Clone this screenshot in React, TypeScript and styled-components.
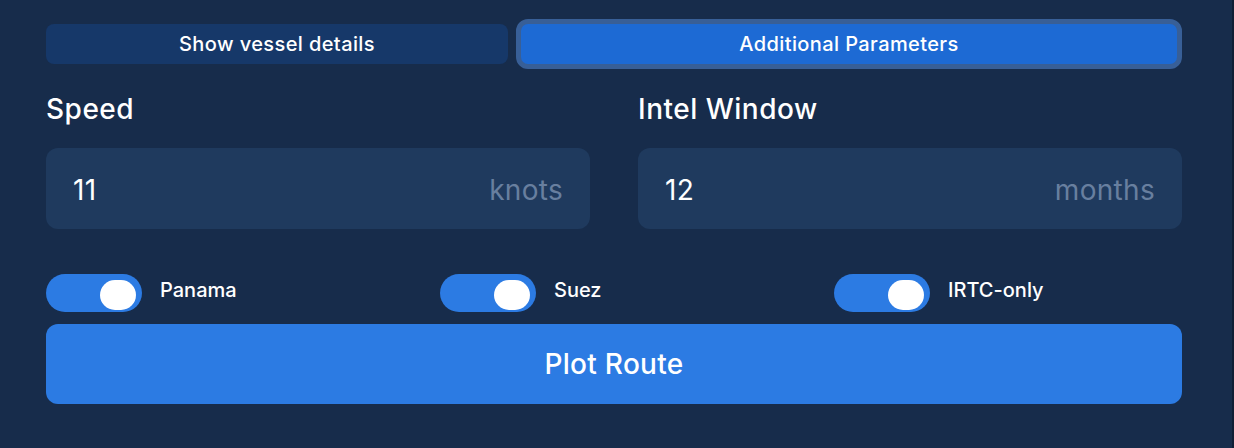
import * as React from 'react';
import styled, { createGlobalStyle } from 'styled-components';

const GlobalStyle = createGlobalStyle`
  html, body {
    margin: 0;
    padding: 0;
    background: #172c4b;
  }
  * {
    box-sizing: border-box;
  }
`;

const Panel = styled.div`
  width: 1234px;
  height: 448px;
  padding: 19px 50px 0 46px;
  background: #172c4b;
  border-right: 2px solid #0f1e35;
  font-family: Inter, Lato, sans-serif;
  color: #ffffff;
  display: flex;
  flex-direction: column;
`;

const Tabs = styled.div`
  display: grid;
  grid-template-columns: 462px 1fr;
  gap: 8px;
  align-items: center;
  height: 50px;
`;

const Tab = styled.button<{ $active?: boolean }>`
  height: ${(p) => (p.$active ? '50px' : '40px')};
  border-radius: ${(p) => (p.$active ? '12px' : '8px')};
  border: ${(p) => (p.$active ? '5px solid #385f97' : 'none')};
  background: ${(p) => (p.$active ? '#1d6ad4' : '#163869')};
  color: #ffffff;
  font-family: inherit;
  font-size: 20px;
  font-weight: 500;
  letter-spacing: 0.4px;
  padding: 0;
  cursor: pointer;
`;

const Fields = styled.div`
  display: grid;
  grid-template-columns: 1fr 1fr;
  gap: 48px;
  margin-top: 23px;
`;

const Field = styled.div`
  display: flex;
  flex-direction: column;
`;

const Label = styled.div`
  font-size: 28px;
  font-weight: 500;
  letter-spacing: 0.5px;
  line-height: 34px;
  height: 34px;
  margin-bottom: 22px;
`;

const InputBox = styled.div`
  height: 81px;
  border-radius: 12px;
  background: #1f3a5e;
  display: flex;
  align-items: center;
  justify-content: space-between;
  padding: 3px 27px 0;
  font-size: 28px;
  letter-spacing: 0.3px;
`;

const Value = styled.span`
  color: #ffffff;
`;

const Unit = styled.span`
  color: #687f9f;
`;

const Switches = styled.div`
  display: grid;
  grid-template-columns: repeat(3, 1fr);
  gap: 46px;
  margin-top: 45px;
`;

const SwitchItem = styled.label`
  display: flex;
  align-items: center;
  gap: 18px;
  cursor: pointer;
`;

const Track = styled.span<{ $on: boolean }>`
  position: relative;
  width: 96px;
  height: 38px;
  border-radius: 19px;
  background: ${(p) => (p.$on ? '#2c7be3' : '#3a4f6e')};
  flex-shrink: 0;
`;

const Knob = styled.span<{ $on: boolean }>`
  position: absolute;
  top: 6px;
  ${(p) => (p.$on ? 'right: 6px;' : 'left: 6px;')}
  width: 36px;
  height: 30px;
  border-radius: 15px;
  background: #ffffff;
`;

const SwitchText = styled.span`
  font-size: 20px;
  font-weight: 500;
  margin-top: -6px;
`;

const PlotButton = styled.button`
  margin-top: 12px;
  height: 80px;
  border: none;
  border-radius: 12px;
  background: #2c7be3;
  color: #ffffff;
  font-family: inherit;
  font-size: 28px;
  font-weight: 500;
  letter-spacing: 0.3px;
  cursor: pointer;
`;

const Toggle = ({ label, on, onChange }: { label: string; on: boolean; onChange: () => void }) => (
  <SwitchItem onClick={onChange}>
    <Track $on={on}>
      <Knob $on={on} />
    </Track>
    <SwitchText>{label}</SwitchText>
  </SwitchItem>
);

const App = () => {
  const [tab, setTab] = React.useState<'vessel' | 'params'>('params');
  const [routes, setRoutes] = React.useState({ panama: true, suez: true, irtc: true });

  const flip = (key: keyof typeof routes) => setRoutes({ ...routes, [key]: !routes[key] });

  return (
    <>
      <GlobalStyle />
      <Panel>
        <Tabs>
          <Tab $active={tab === 'vessel'} onClick={() => setTab('vessel')}>
            Show vessel details
          </Tab>
          <Tab $active={tab === 'params'} onClick={() => setTab('params')}>
            Additional Parameters
          </Tab>
        </Tabs>
        <Fields>
          <Field>
            <Label>Speed</Label>
            <InputBox>
              <Value>11</Value>
              <Unit>knots</Unit>
            </InputBox>
          </Field>
          <Field>
            <Label>Intel Window</Label>
            <InputBox>
              <Value>12</Value>
              <Unit>months</Unit>
            </InputBox>
          </Field>
        </Fields>
        <Switches>
          <Toggle label="Panama" on={routes.panama} onChange={() => flip('panama')} />
          <Toggle label="Suez" on={routes.suez} onChange={() => flip('suez')} />
          <Toggle label="IRTC-only" on={routes.irtc} onChange={() => flip('irtc')} />
        </Switches>
        <PlotButton>Plot Route</PlotButton>
      </Panel>
    </>
  );
};

export default App;
